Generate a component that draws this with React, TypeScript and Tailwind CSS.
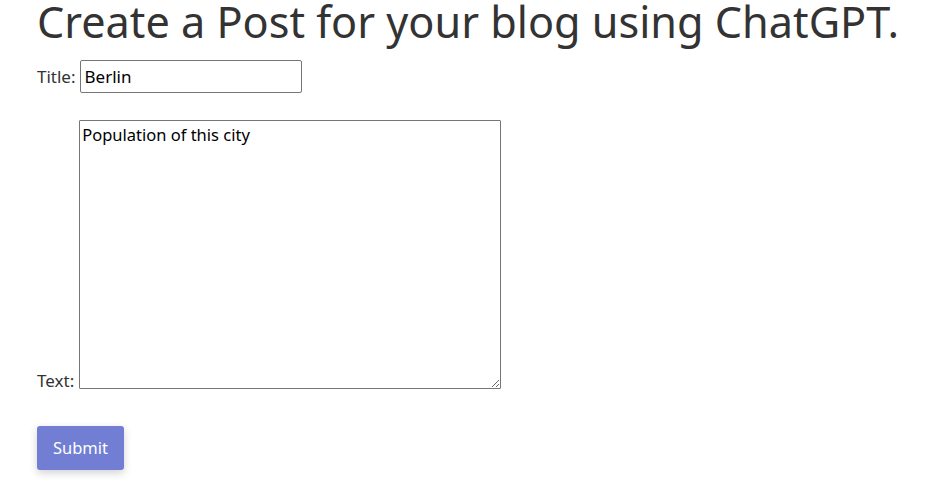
export default function App() {
  return (
    <div className="min-h-screen bg-white px-[37px] text-[#333333]" style={{ fontFamily: '"Noto Sans", sans-serif' }}>
      <h1 className="text-[43.2px] leading-[44px] mb-[16px] whitespace-nowrap">Create a Post for your blog using ChatGPT.</h1>
      <div className="flex items-center">
        <span className="text-[17px] mr-[4px]">Title:</span>
        <input
          defaultValue="Berlin"
          className="w-[222px] h-[33px] border border-[#767676] rounded-[2px] px-[4px] text-[17px] text-black outline-none"
        />
      </div>
      <div className="flex items-end mt-[27px]">
        <span className="text-[17px] mr-[5px] leading-[17px]">Text:</span>
        <textarea
          defaultValue="Population of this city"
          className="w-[422px] h-[269px] border border-[#767676] rounded-[1px] px-[2px] py-[2px] text-[16.5px] leading-[24px] text-black outline-none"
        />
      </div>
      <button className="mt-[37px] w-[87px] h-[44px] rounded-[3px] bg-[#717ed4] text-white text-[16.5px] shadow-[0_3px_8px_rgba(0,0,0,0.18)]">
        Submit
      </button>
    </div>
  );
}
